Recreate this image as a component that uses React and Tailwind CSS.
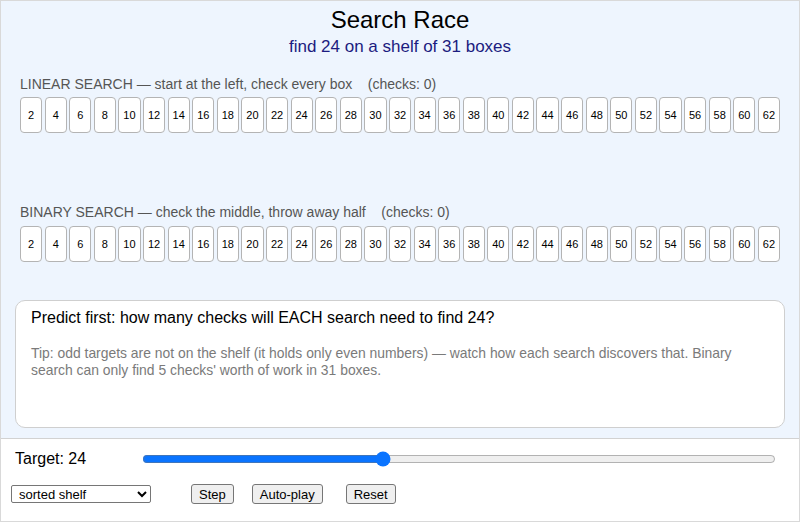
import React from "react";

const values = Array.from({ length: 31 }, (_, i) => (i + 1) * 2);

function Shelf() {
  return (
    <div className="flex gap-[2.4px] h-[36px]">
      {values.map((v) => (
        <div
          key={v}
          className="flex-1 flex items-center justify-center bg-white border border-[#b4b4b4] rounded-[4px] text-[11px] text-black"
        >
          {v}
        </div>
      ))}
    </div>
  );
}

export default function App() {
  return (
    <div
      className="w-[800px] h-[522px] border border-[#d9d9d9] flex flex-col overflow-hidden bg-white"
      style={{ fontFamily: '"Liberation Sans", Arial, sans-serif' }}
    >
      <div className="h-[438px] bg-[#eef5fe] flex flex-col border-b border-[#d2d2d2]">
        <div className="text-center text-[24px] leading-[28px] text-black mt-[5px]">Search Race</div>
        <div className="text-center text-[17px] leading-[20px] text-[#1c1c80] mt-[3px]">
          find 24 on a shelf of 31 boxes
        </div>
        <div className="px-[19px] mt-[19px]">
          <div className="text-[14px] leading-[16px] text-[#555] whitespace-pre">
            {"LINEAR SEARCH — start at the left, check every box    (checks: 0)"}
          </div>
          <div className="mt-[5px]">
            <Shelf />
          </div>
          <div className="text-[14px] leading-[16px] text-[#555] whitespace-pre mt-[71px]">
            {"BINARY SEARCH — check the middle, throw away half    (checks: 0)"}
          </div>
          <div className="mt-[6px]">
            <Shelf />
          </div>
        </div>
        <div className="mx-[14px] mt-[38px] h-[128px] bg-white border border-[#cfcfcf] rounded-[10px] px-[15px] pt-[7px]">
          <div className="text-[16px] leading-[20px] text-black">
            Predict first: how many checks will EACH search need to find 24?
          </div>
          <div className="text-[13.9px] leading-[17px] text-[#7a7a7a] mt-[17px] pr-[30px]">
            Tip: odd targets are not on the shelf (it holds only even numbers) — watch how each search discovers that. Binary search can only find 5 checks' worth of work in 31 boxes.
          </div>
        </div>
      </div>
      <div className="flex-1 flex flex-col px-[10px]">
        <div className="flex items-center mt-[10px] h-[20px]">
          <span className="text-[16px] text-black ml-[4px] w-[128px]">Target: 24</span>
          <input
            type="range"
            min={1}
            max={62}
            defaultValue={24}
            className="w-[634px] accent-[#0a74ff] -ml-[1px]"
          />
        </div>
        <div className="flex items-center mt-[15px]">
          <select className="w-[140px] h-[18px] text-[13px] border border-[#767676] rounded-[2px] bg-white pl-[3px] text-black">
            <option>sorted shelf</option>
          </select>
          <button className="ml-[40px] h-[20px] px-[7px] text-[13px] bg-[#efefef] border border-[#767676] rounded-[3px] text-black">
            Step
          </button>
          <button className="ml-[18px] h-[20px] px-[7px] text-[13px] bg-[#efefef] border border-[#767676] rounded-[3px] text-black">
            Auto-play
          </button>
          <button className="ml-[23px] h-[20px] px-[7px] text-[13px] bg-[#efefef] border border-[#767676] rounded-[3px] text-black">
            Reset
          </button>
        </div>
      </div>
    </div>
  );
}
